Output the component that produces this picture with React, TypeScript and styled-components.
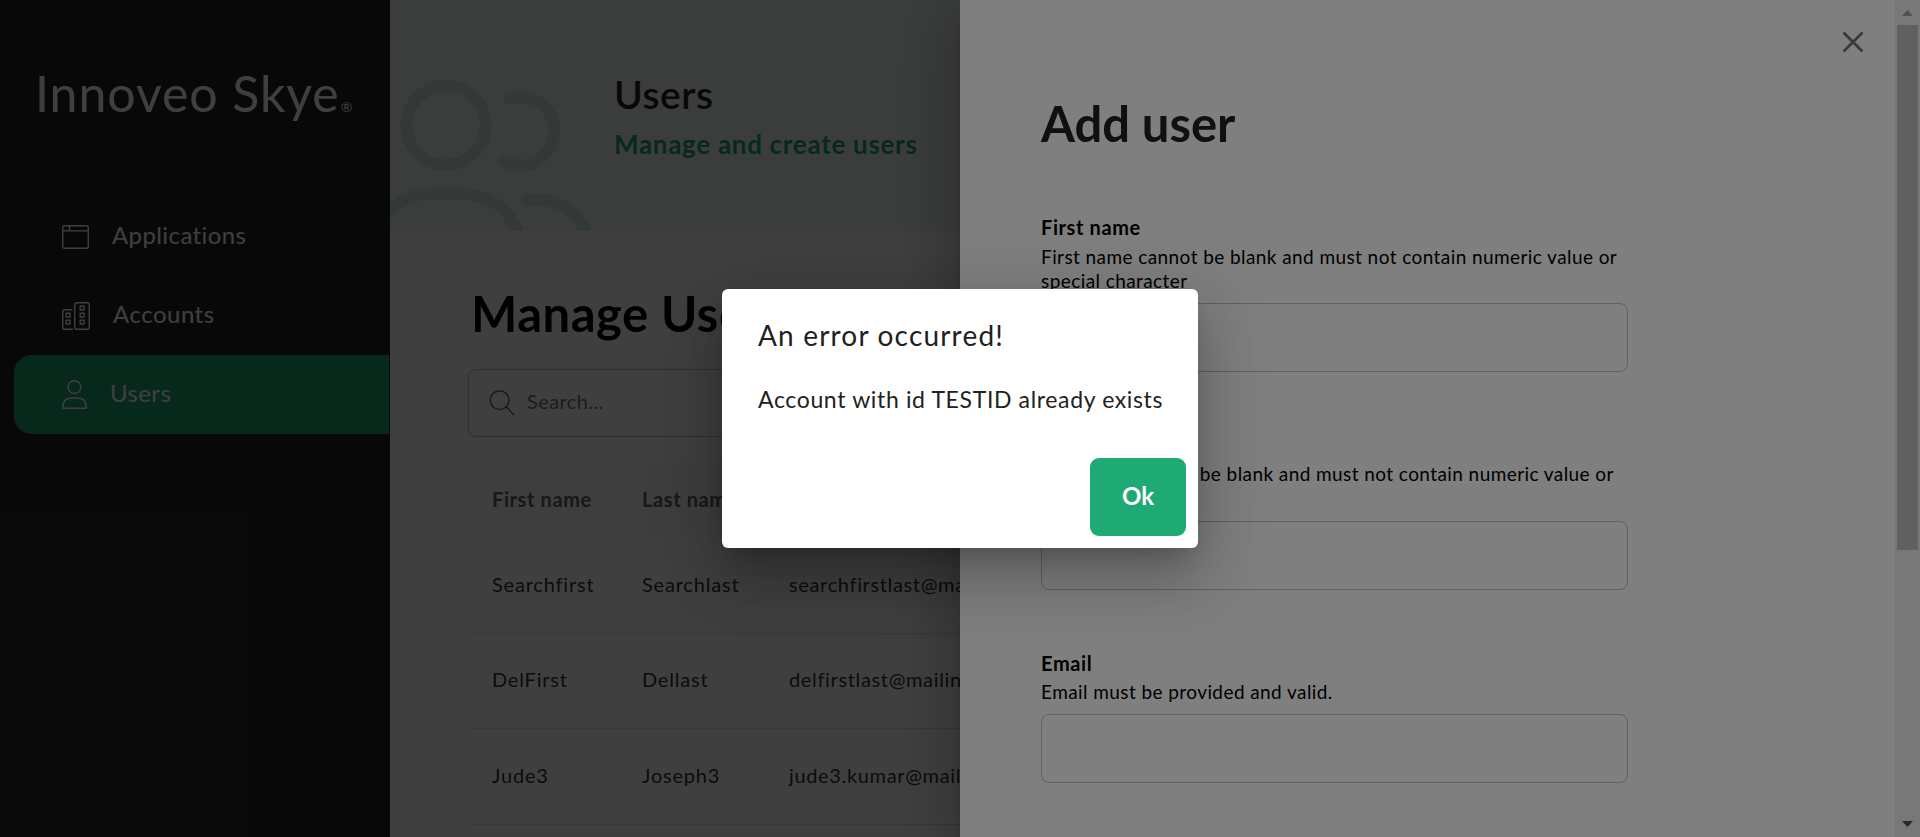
import React from "react";
import styled, { createGlobalStyle } from "styled-components";

const GlobalStyle = createGlobalStyle`
  * { box-sizing: border-box; }
  html, body { margin: 0; padding: 0; overflow: hidden; background: #fff; }
  body { font-family: Lato, "Liberation Sans", sans-serif; font-size: 20px; color: #212121; }
  h1, h2, p { margin: 0; }
`;

const Page = styled.div`
  position: relative;
  display: flex;
  width: 1920px;
  height: 837px;
  overflow: hidden;
`;

const Sidebar = styled.aside`
  flex: 0 0 390px;
  padding: 63px 1px 0 14px;
  background: #232323;
  color: #fff;
`;

const Logo = styled.div`
  height: 60px;
  margin-bottom: 74px;
  padding-left: 21px;
  font-size: 50px;
  line-height: 60px;
  letter-spacing: 0.95px;
  white-space: nowrap;
`;

const Registered = styled.span`
  margin-left: 1px;
  font-size: 14px;
  letter-spacing: 0;
`;

const NavItem = styled.a<{ $active?: boolean }>`
  display: flex;
  align-items: center;
  gap: 23px;
  height: 79px;
  padding-left: 48px;
  border-radius: 18px 0 0 18px;
  background: ${(p) => (p.$active ? "#1fa673" : "transparent")};
`;

const NavLabel = styled.span<{ $spacing: number }>`
  padding-bottom: 5px;
  font-size: 24px;
  letter-spacing: ${(p) => p.$spacing}px;
`;

const Content = styled.main`
  flex: 1;
  min-width: 0;
`;

const Banner = styled.header`
  position: relative;
  height: 231px;
  padding: 71px 0 0 224px;
  background: #eef5f2;
  overflow: hidden;
`;

const BannerArt = styled.svg`
  position: absolute;
  left: 0;
  top: 0;
`;

const BannerTitle = styled.h1`
  font-size: 39px;
  font-weight: 600;
  line-height: 46px;
  letter-spacing: 0.5px;
  color: #212121;
`;

const BannerText = styled.p`
  margin-top: 10px;
  font-size: 26px;
  font-weight: 700;
  line-height: 34px;
  letter-spacing: 0.7px;
  color: #1fa673;
`;

const Section = styled.section`
  padding: 52px 0 0 78px;
`;

const SectionTitle = styled.h2`
  padding-left: 3px;
  font-size: 49px;
  font-weight: 700;
  line-height: 60px;
  letter-spacing: 0.5px;
  color: #000;
`;

const SearchBox = styled.div`
  display: flex;
  align-items: center;
  gap: 12px;
  height: 68px;
  margin: 26px 0 24px;
  padding-left: 20px;
  border: 1px solid #bdbdbd;
  border-radius: 8px;
  color: #757575;
`;

const Placeholder = styled.span`
  padding-bottom: 4px;
  font-size: 20px;
  letter-spacing: 0.4px;
`;

const Row = styled.div<{ $head?: boolean }>`
  display: grid;
  grid-template-columns: 150px 147px 1fr;
  align-items: center;
  height: ${(p) => (p.$head ? "77px" : "95.6px")};
  padding: 0 0 ${(p) => (p.$head ? 2 : 3)}px 24px;
  border-bottom: ${(p) => (p.$head ? "none" : "1px solid #e0e0e0")};
  background: ${(p) => (p.$head ? "#fafafa" : "transparent")};
  color: ${(p) => (p.$head ? "#616161" : "#2b3540")};
  font-weight: ${(p) => (p.$head ? 700 : 400)};
  white-space: nowrap;
`;

const Cell = styled.span<{ $spacing?: number }>`
  font-size: 20px;
  letter-spacing: ${(p) => p.$spacing ?? 0.8}px;
`;

const Backdrop = styled.div`
  position: absolute;
  inset: 0;
  background: rgba(0, 0, 0, 0.5);
`;

const Drawer = styled.aside`
  position: absolute;
  top: 0;
  right: 0;
  bottom: 0;
  display: flex;
  justify-content: space-between;
  width: 960px;
  background: #fff;
  box-shadow: 0 12px 15px -7px rgba(0, 0, 0, 0.2), 0 24px 57px 4px rgba(0, 0, 0, 0.14),
    0 14px 69px 12px rgba(0, 0, 0, 0.12);
`;

const Form = styled.div`
  width: 668px;
  padding: 93px 0 0 81px;
`;

const FormTitle = styled.h1`
  margin-bottom: 60px;
  font-size: 49px;
  font-weight: 700;
  line-height: 60px;
  letter-spacing: -0.05px;
`;

const Field = styled.div`
  margin-bottom: 59.4px;
  color: #000;
`;

const FieldLabel = styled.div`
  margin-bottom: 3.5px;
  font-size: 20px;
  font-weight: 700;
  line-height: 28px;
  letter-spacing: 0.6px;
`;

const FieldHelp = styled.div`
  font-size: 19px;
  line-height: 24.2px;
  letter-spacing: 0.42px;
`;

const Input = styled.div`
  height: 69px;
  margin-top: 9.7px;
  border: 1px solid #c4c4c4;
  border-radius: 8px;
`;

const DrawerSide = styled.div`
  display: flex;
  gap: 31px;
`;

const CloseButton = styled.div`
  padding-top: 31px;
`;

const Scrollbar = styled.div`
  display: flex;
  flex-direction: column;
  align-items: center;
  width: 25px;
  background: #f1f1f1;
`;

const ScrollArrow = styled.svg`
  flex: 0 0 25px;
`;

const ScrollTrack = styled.div`
  flex: 1;
`;

const ScrollThumb = styled.div`
  width: 21px;
  height: 525px;
  background: #c1c1c1;
`;

const DialogLayer = styled(Backdrop)`
  display: flex;
  align-items: center;
  justify-content: center;
`;

const Dialog = styled.div`
  display: flex;
  flex-direction: column;
  width: 476px;
  height: 259px;
  padding: 29px 12px 12px 36px;
  border-radius: 6px;
  background: #fff;
  box-shadow: 0 16px 22px -10px rgba(0, 0, 0, 0.2), 0 36px 57px 4px rgba(0, 0, 0, 0.14),
    0 14px 69px 12px rgba(0, 0, 0, 0.12);
`;

const DialogTitle = styled.h2`
  font-size: 28px;
  font-weight: 400;
  line-height: 34px;
  letter-spacing: 1.18px;
  white-space: nowrap;
`;

const DialogText = styled.p`
  margin-top: 31px;
  font-size: 23px;
  line-height: 32px;
  letter-spacing: 0.64px;
  white-space: nowrap;
`;

const OkButton = styled.button`
  align-self: flex-end;
  width: 96px;
  height: 78px;
  margin-top: auto;
  padding: 0 0 4px;
  border: 0;
  border-radius: 9px;
  background: #1fa974;
  color: #fff;
  font: 700 24px Lato, "Liberation Sans", sans-serif;
`;

const AppIcon = () => (
  <svg width="27" height="24" viewBox="0 0 27 24" fill="none" stroke="#fff" strokeWidth="1.4">
    <rect x="0.7" y="0.7" width="25.6" height="22.6" rx="2" />
    <path d="M0.7 5.9H26.3M7.5 0.7V5.9" />
  </svg>
);

const AccountsIcon = () => (
  <svg width="28" height="28" viewBox="0 0 28 28" fill="none" stroke="#fff" strokeWidth="1.4">
    <rect x="12.7" y="0.7" width="14.6" height="26.6" rx="2" />
    <path d="M10.4 7.7H2.7a2 2 0 0 0-2 2V25.3a2 2 0 0 0 2 2H11" />
    <rect x="18.2" y="4.2" width="3.8" height="3.8" />
    <rect x="18.2" y="11.2" width="3.8" height="3.8" />
    <rect x="18.2" y="18.2" width="3.8" height="3.8" />
    <rect x="4.2" y="11.2" width="3.8" height="3.8" />
    <rect x="4.2" y="18.2" width="3.8" height="3.8" />
  </svg>
);

const UserIcon = () => (
  <svg width="25" height="29" viewBox="0 0 25 29" fill="none" stroke="#fff" strokeWidth="1.4">
    <circle cx="12.4" cy="7.1" r="6.4" />
    <path d="M0.7 28.3C0.7 21.5 4 18 9.5 18H15.5C21 18 24.3 21.5 24.3 28.3Z" strokeLinejoin="round" />
  </svg>
);

const SearchIcon = () => (
  <svg width="26" height="26" viewBox="0 0 26 26" fill="none" stroke="#616161" strokeWidth="1.4">
    <circle cx="10.6" cy="10.1" r="9.4" />
    <path d="M17.4 17.1L25.2 24.9" />
  </svg>
);

const CloseIcon = () => (
  <svg width="22" height="22" viewBox="0 0 22 22" fill="none" stroke="#757575" strokeWidth="2.8">
    <path d="M1.5 1.5L20.5 20.5M20.5 1.5L1.5 20.5" />
  </svg>
);

const users = [
  ["Searchfirst", "Searchlast", "searchfirstlast@mailinator.com"],
  ["DelFirst", "Dellast", "delfirstlast@mailinator.com"],
  ["Jude3", "Joseph3", "jude3.kumar@mailinator.com"],
];

const fields = [
  ["First name", "First name cannot be blank and must not contain numeric value or special character"],
  ["Last name", "Last name cannot be blank and must not contain numeric value or special character"],
  ["Email", "Email must be provided and valid."],
];

export default function App() {
  return (
    <Page>
      <GlobalStyle />
      <Sidebar>
        <Logo>
          Innoveo Skye<Registered>®</Registered>
        </Logo>
        <NavItem>
          <AppIcon />
          <NavLabel $spacing={0.4}>Applications</NavLabel>
        </NavItem>
        <NavItem>
          <AccountsIcon />
          <NavLabel $spacing={0.5}>Accounts</NavLabel>
        </NavItem>
        <NavItem $active>
          <UserIcon />
          <NavLabel $spacing={0.4}>Users</NavLabel>
        </NavItem>
      </Sidebar>

      <Content>
        <Banner>
          <BannerArt width="220" height="231" viewBox="390 0 220 231" fill="none" stroke="#c8e6dc" strokeWidth="11.7" strokeLinecap="round">
            <circle cx="446.1" cy="125.4" r="39.7" />
            <path d="M508.8 98.8A34.3 34.3 0 1 1 503.2 161" />
            <path d="M374 250A56 56 0 0 1 430 194H464A56 56 0 0 1 520 250" />
            <path d="M526.2 200.2H540A48 48 0 0 1 588 248" />
          </BannerArt>
          <BannerTitle>Users</BannerTitle>
          <BannerText>Manage and create users</BannerText>
        </Banner>
        <Section>
          <SectionTitle>Manage Users</SectionTitle>
          <SearchBox>
            <SearchIcon />
            <Placeholder>Search...</Placeholder>
          </SearchBox>
          <Row $head>
            <Cell $spacing={0.6}>First name</Cell>
            <Cell $spacing={0.6}>Last name</Cell>
            <Cell $spacing={0.6}>Email</Cell>
          </Row>
          {users.map(([first, last, email]) => (
            <Row key={email}>
              <Cell>{first}</Cell>
              <Cell>{last}</Cell>
              <Cell $spacing={0.65}>{email}</Cell>
            </Row>
          ))}
        </Section>
      </Content>

      <Backdrop />
      <Drawer>
        <Form>
          <FormTitle>Add user</FormTitle>
          {fields.map(([label, help]) => (
            <Field key={label}>
              <FieldLabel>{label}</FieldLabel>
              <FieldHelp>{help}</FieldHelp>
              <Input />
            </Field>
          ))}
        </Form>
        <DrawerSide>
          <CloseButton>
            <CloseIcon />
          </CloseButton>
          <Scrollbar>
            <ScrollArrow width="25" height="25" viewBox="0 0 25 25" fill="#a3a3a3">
              <path d="M7 16L12.5 10L18 16Z" />
            </ScrollArrow>
            <ScrollTrack>
              <ScrollThumb />
            </ScrollTrack>
            <ScrollArrow width="25" height="25" viewBox="0 0 25 25" fill="#505050">
              <path d="M7 9L12.5 15L18 9Z" />
            </ScrollArrow>
          </Scrollbar>
        </DrawerSide>
      </Drawer>

      <DialogLayer>
        <Dialog>
          <DialogTitle>An error occurred!</DialogTitle>
          <DialogText>Account with id TESTID already exists</DialogText>
          <OkButton>Ok</OkButton>
        </Dialog>
      </DialogLayer>
    </Page>
  );
}
